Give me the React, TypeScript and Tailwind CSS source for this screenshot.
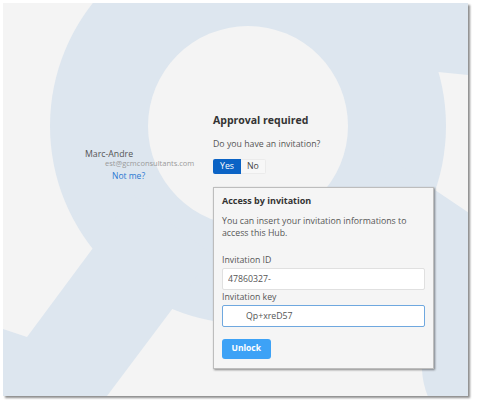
import React from 'react';

const HubBackdrop = () => (
  <svg className="absolute inset-0" width="465" height="393" viewBox="0 0 465 393">
    <circle cx="245" cy="123" r="198" fill="#dde6ef" />
    <polygon points="130,192 210,252 170,305 104,393 95,405 -10,405 -10,322.7 24,334 90,245" fill="#dde6ef" />
    <polygon points="375,63 435,69 470,72.5 470,-10 375,-10" fill="#dde6ef" />
    <path d="M380 150 L432 187 L470 212.5 L470 400 L428 400 Q420 385 419 367 L390 260 Z" fill="#dde6ef" />
    <circle cx="245" cy="123" r="100" fill="#f4f4f4" />
  </svg>
);

const Field = ({ label, value, focused, indent }) => (
  <div className="flex flex-col">
    <label className="text-[8.75px] leading-[12px] text-[#555] mb-[2px]">{label}</label>
    <input
      readOnly
      value={value}
      className={`h-[22px] w-full rounded-[2px] border bg-white text-[8.75px] text-[#555] outline-none ${
        focused ? 'border-[#6fa8df]' : 'border-[#e0e0e0]'
      } ${indent ? 'pl-[23px]' : 'pl-[5px]'}`}
    />
  </div>
);

export default function App() {
  return (
    <div className="w-[477px] h-[405px] bg-white pt-[3px] pl-[3px] font-['Open_Sans',sans-serif]">
      <div className="relative w-[465px] h-[393px] overflow-hidden bg-[#f4f4f4] shadow-[2px_2px_2px_rgba(0,0,0,0.45)]">
        <HubBackdrop />

        <div className="relative flex pt-[110px]">
          <div className="w-[210px] shrink-0 pl-[82px] pt-[36px] flex flex-col items-start">
            <span className="text-[8.75px] leading-[10px] text-[#555]">Marc-Andre</span>
            <span className="ml-[20px] text-[7.5px] leading-[9px] text-[#9a9a9a]">est@gcmconsultants.com</span>
            <a href="#" className="ml-[27px] mt-[2px] text-[8.5px] leading-[12px] text-[#2a78d2]">
              Not me?
            </a>
          </div>

          <div className="flex flex-col items-start">
            <h1 className="text-[10.5px] leading-[14px] font-bold text-[#333]">Approval required</h1>
            <p className="mt-[10.5px] text-[8.75px] leading-[12px] text-[#555]">Do you have an invitation?</p>

            <div className="mt-[9px] flex h-[15px]">
              <button className="h-full rounded-l-[2px] bg-[#0b63c5] px-[7px] text-[8.75px] leading-[15px] text-white">
                Yes
              </button>
              <button className="h-full rounded-r-[2px] border border-l-0 border-[#ebebeb] bg-[#f7f7f7] px-[6px] text-[8.75px] leading-[13px] text-[#444]">
                No
              </button>
            </div>

            <div className="mt-[13px] w-[221px] border border-[#bdbdbd] bg-[#f5f5f5] px-[8px] pt-[7px] pb-[9.5px] shadow-[1px_1px_2px_rgba(0,0,0,0.45)]">
              <h2 className="text-[9px] leading-[12px] font-bold text-[#333]">Access by invitation</h2>
              <p className="mt-[8.5px] text-[8.75px] leading-[12px] text-[#555]">
                You can insert your invitation informations to access this Hub.
              </p>

              <div className="mt-[14.5px] flex flex-col gap-[1px]">
                <Field label="Invitation ID" value="47860327-" focused={false} indent={false} />
                <Field label="Invitation key" value="Qp+xreD57" focused indent />
              </div>

              <button className="mt-[12px] h-[20px] rounded-[3px] bg-[#3da2f6] px-[9.5px] text-[8.5px] font-bold text-white">
                Unlock
              </button>
            </div>
          </div>
        </div>
      </div>
    </div>
  );
}
